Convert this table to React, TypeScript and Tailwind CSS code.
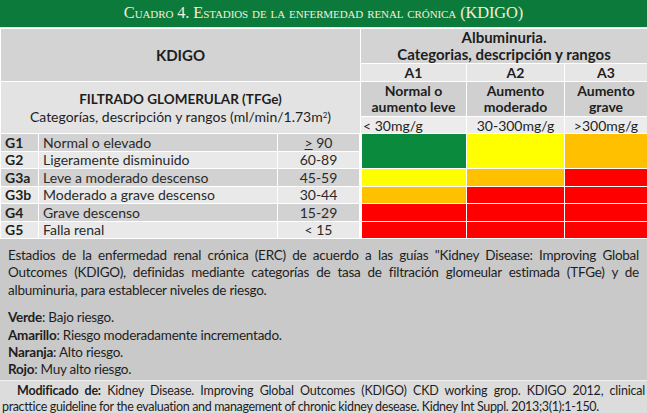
import type { ReactNode } from 'react';

// ── Risk colours ──────────────────────────────────────────────────────────────

const GREEN = 'bg-[#0a8a3c]';
const YELLOW = 'bg-[#ffff00]';
const ORANGE = 'bg-[#ffc000]';
const RED = 'bg-[#ff0000]';

type Stage = {
  code: string;
  label: string;
  range: ReactNode;
  shade: string;
};

const STAGES: Stage[] = [
  { code: 'G1', label: 'Normal o elevado', range: <><span className="underline">&gt;</span> 90</>, shade: 'bg-[#d2d2d2]' },
  { code: 'G2', label: 'Ligeramente disminuido', range: '60-89', shade: 'bg-[#e9e9e9]' },
  { code: 'G3a', label: 'Leve a moderado descenso', range: '45-59', shade: 'bg-[#d2d2d2]' },
  { code: 'G3b', label: 'Moderado a grave descenso', range: '30-44', shade: 'bg-[#e9e9e9]' },
  { code: 'G4', label: 'Grave descenso', range: '15-29', shade: 'bg-[#d2d2d2]' },
  { code: 'G5', label: 'Falla renal', range: '< 15', shade: 'bg-[#e9e9e9]' },
];

// A1, A2, A3 per stage; G1 and G2 share merged cells
const GRID: string[][] = [
  [GREEN, YELLOW, ORANGE],
  [],
  [YELLOW, ORANGE, RED],
  [ORANGE, RED, RED],
  [RED, RED, RED],
  [RED, RED, RED],
];

const cell = 'border border-white p-0';

export default function App() {
  return (
    <div className="w-[647px] h-[413px] overflow-hidden bg-white text-[#1e1e1e]" style={{ fontFamily: 'Lato, "Open Sans", sans-serif' }}>
      {/* ── Title ─────────────────────────────────────────────────────── */}
      <div
        className="h-[27px] bg-[#0b7a3b] text-[#f3eed8] flex items-center justify-center text-[16.4px] leading-none tracking-[-0.1px]"
        style={{ fontFamily: '"Liberation Serif", serif', fontVariant: 'small-caps' }}
      >
        Cuadro 4. Estadios de la enfermedad renal crónica (KDIGO)
      </div>
      <div className="h-[1px] bg-[#e6e6e6]" />

      {/* ── Table ─────────────────────────────────────────────────────── */}
      <table className="w-[647px] table-fixed border-collapse">
        <colgroup>
          <col className="w-[38px]" />
          <col className="w-[239px]" />
          <col className="w-[83px]" />
          <col className="w-[106px]" />
          <col className="w-[98px]" />
          <col className="w-[83px]" />
        </colgroup>
        <tbody>
          <tr className="h-[35px]">
            <td colSpan={3} rowSpan={2} className={`${cell} bg-[#d3d3d3] text-center text-[15px] font-bold`}>
              KDIGO
            </td>
            <td colSpan={3} className={`${cell} bg-[#d3d3d3] text-center text-[15px] font-bold leading-[17px]`}>
              Albuminuria.
              <br />
              Categorias, descripción y rangos
            </td>
          </tr>
          <tr className="h-[18px]">
            {['A1', 'A2', 'A3'].map((a) => (
              <td key={a} className={`${cell} bg-[#e6e6e6] text-center text-[14px] font-bold leading-[16px]`}>
                {a}
              </td>
            ))}
          </tr>
          <tr className="h-[35px]">
            <td colSpan={3} rowSpan={2} className={`${cell} bg-[#e3e3e3] text-center leading-[17px]`}>
              <div className="text-[13.5px] font-bold">FILTRADO GLOMERULAR (TFGe)</div>
              <div className="text-[14px]">
                Categorías, descripción y rangos (ml/min/1.73m<sup className="text-[8px]">2</sup>)
              </div>
            </td>
            <td className={`${cell} bg-[#d0d0d0] text-center text-[14px] font-bold leading-[16px]`}>
              Normal o
              <br />
              aumento leve
            </td>
            <td className={`${cell} bg-[#d0d0d0] text-center text-[14px] font-bold leading-[16px]`}>
              Aumento
              <br />
              moderado
            </td>
            <td className={`${cell} bg-[#d0d0d0] text-center text-[14px] font-bold leading-[16px]`}>
              Aumento
              <br />
              grave
            </td>
          </tr>
          <tr className="h-[17px]">
            <td className={`${cell} bg-[#ececec] text-[14px] leading-[15px] pl-[2px]`}>&lt; 30mg/g</td>
            <td className={`${cell} bg-[#ececec] text-[14px] leading-[15px] text-center`}>30-300mg/g</td>
            <td className={`${cell} bg-[#ececec] text-[14px] leading-[15px] text-center`}>&gt;300mg/g</td>
          </tr>

          {STAGES.map((s, i) => (
            <tr key={s.code} className="h-[17.5px] text-[14px] leading-[15px]">
              <td className={`${cell} ${s.shade} pl-[4px] font-bold`}>{s.code}</td>
              <td className={`${cell} ${s.shade} pl-[4px] text-[#2a2a2a]`}>{s.label}</td>
              <td className={`${cell} ${s.shade} text-center text-[#2a2a2a]`}>{s.range}</td>
              {GRID[i].map((c, j) => (
                <td key={j} rowSpan={i === 0 ? 2 : 1} className={`${cell} ${c} ${j === 0 ? 'border-l-[3px]' : ''}`} />
              ))}
            </tr>
          ))}
        </tbody>
      </table>

      {/* ── Notes ─────────────────────────────────────────────────────── */}
      <div className="bg-[#c9c9c9] px-[8px] pt-[8px] pb-[1px] text-[13.5px] tracking-[-0.25px] leading-[17.4px] text-[#1e1e1e]">
        <p className="text-justify">
          Estadios de la enfermedad renal crónica (ERC) de acuerdo a las guías "Kidney Disease: Improving Global{' '}
          Outcomes (KDIGO), definidas mediante categorías de tasa de filtración glomeular estimada (TFGe) y de{' '}
          albuminuria, para establecer niveles de riesgo.
        </p>
        <ul className="mt-[10px]">
          <li><b>Verde</b>: Bajo riesgo.</li>
          <li><b>Amarillo</b>: Riesgo moderadamente incrementado.</li>
          <li><b>Naranja</b>: Alto riesgo.</li>
          <li><b>Rojo</b>: Muy alto riesgo.</li>
        </ul>
      </div>
      <div className="h-[1px] bg-[#efefef]" />
      <div className="bg-[#dcdcdc] h-[40px] px-[2px] pt-[2px] text-[12.5px] tracking-[-0.2px] leading-[16px] text-[#1e1e1e]">
        <p className="text-justify [text-align-last:justify] indent-[15px] whitespace-nowrap">
          <b>Modificado de:</b> Kidney Disease. Improving Global Outcomes (KDIGO) CKD working grop. KDIGO 2012, clinical
        </p>
        <p className="whitespace-nowrap tracking-[-0.35px]">
          practtice guideline for the evaluation and management of chronic kidney desease. Kidney Int Suppl. 2013;3(1):1-150.
        </p>
      </div>
    </div>
  );
}
